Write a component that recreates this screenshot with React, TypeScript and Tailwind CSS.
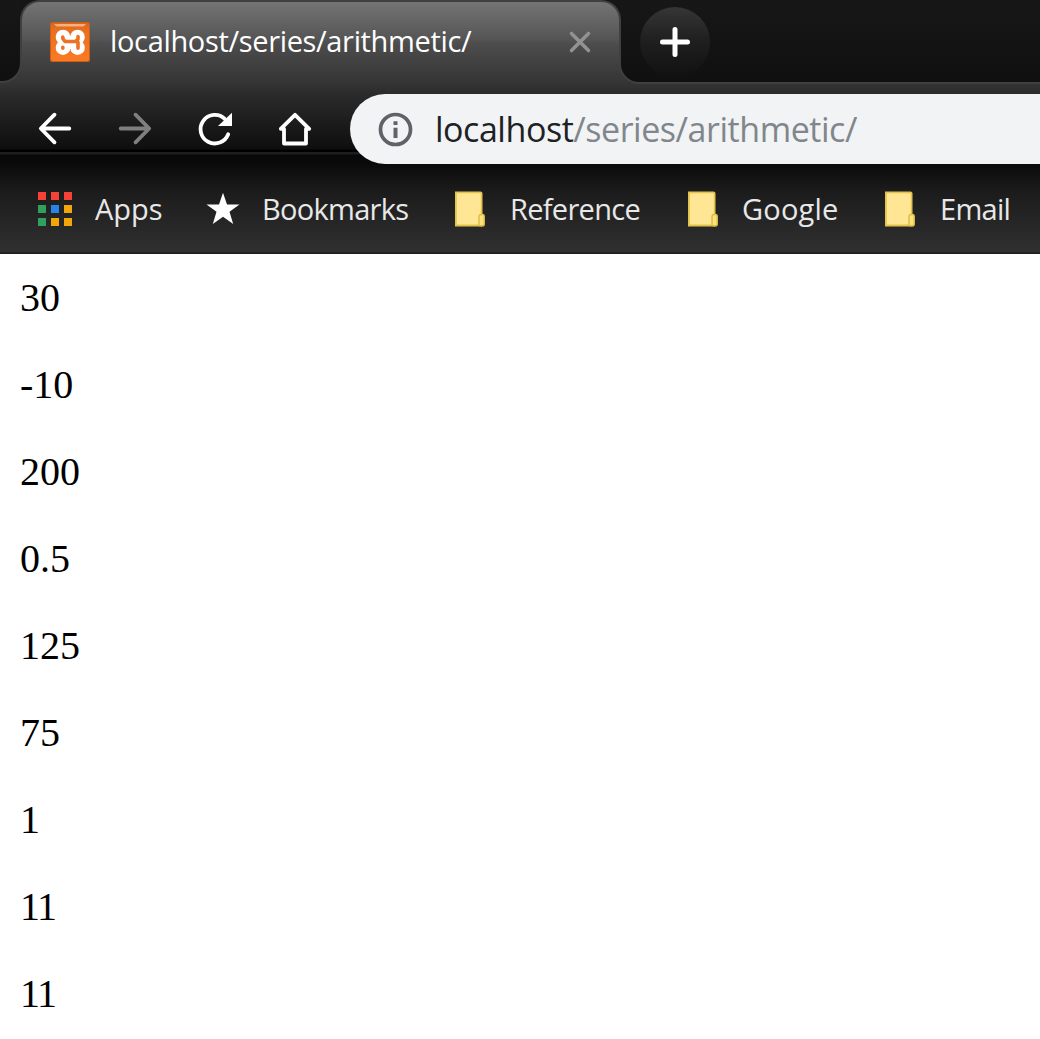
import React from "react";

const chromeGradient =
  "bg-[linear-gradient(to_bottom,#747474_0px,#545454_40px,#4d4d4d_43px,#343434_84px,#2b2b2b_94px,#0e0e0e_149px,#000_150px,#000_152px,#1e1e1e_152px,#1e1e1e_154px,#080808_155px,#0a0a0a_164px,#1b1b1b_190px,#303030_252px,#1c1c1c_253px)]";

const tabGradient =
  "bg-[linear-gradient(to_bottom,#747474_0px,#545454_38px,#4d4d4d_41px,#343434_82px)] bg-no-repeat bg-[length:100%_82px]";

function XamppIcon() {
  return (
    <svg width="40" height="40" viewBox="0 0 40 40" className="shrink-0">
      <defs>
        <linearGradient id="tile" x1="0" y1="0" x2="0" y2="1">
          <stop offset="0" stopColor="#d9661c" />
          <stop offset="0.2" stopColor="#e9701f" />
          <stop offset="1" stopColor="#fb7a24" />
        </linearGradient>
      </defs>
      <rect width="40" height="40" rx="2.5" fill="#c95f1c" />
      <rect x="1" y="1" width="38" height="38" rx="2" fill="url(#tile)" />
      <path d="M4 2H36L33.5 4.5H6.5Z" fill="#f5b080" />
      <g fill="#fff">
        <circle cx="13" cy="15" r="7.3" />
        <circle cx="27.5" cy="15" r="7.3" />
        <circle cx="13" cy="25.7" r="7.3" />
        <circle cx="27.5" cy="25.7" r="7.3" />
        <rect x="8" y="14" width="24.5" height="13" />
      </g>
      <g fill="none" stroke="#ec7224" strokeLinecap="round" strokeLinejoin="round">
        <path d="M12.8 15V16.5L15 19.5H25.5L28 17V14.5M28 20V26.2M12.8 25.2V26.2" strokeWidth="3.6" />
      </g>
    </svg>
  );
}

function Arrow({ className }: { className: string }) {
  return (
    <svg width="34" height="34" viewBox="0 0 34 34" fill="none" stroke="currentColor" strokeWidth="3.8" strokeLinecap="round" strokeLinejoin="round" className={className}>
      <path d="M31.3 16.5H3.5M16.5 2.7L2.8 16.5L16.5 30.3" />
    </svg>
  );
}

function ReloadIcon() {
  return (
    <svg width="36" height="36" viewBox="0 0 36 36" fill="none" className="text-white">
      <path d="M31.2 23.3A14.3 14.3 0 1 1 27.7 7.8" stroke="currentColor" strokeWidth="3.8" strokeLinecap="round" />
      <path d="M35 1.7V15H21Z" fill="currentColor" />
    </svg>
  );
}

function HomeIcon() {
  return (
    <svg width="36" height="36" viewBox="0 0 36 36" fill="none" stroke="#fff" strokeWidth="3.8" strokeLinecap="round" strokeLinejoin="round">
      <path d="M3.8 17.8L18 3.8L32.2 17.8H29V32.5H7V17.8Z" />
    </svg>
  );
}

function InfoIcon() {
  return (
    <svg width="34" height="34" viewBox="0 0 34 34" className="shrink-0 overflow-visible">
      <circle cx="17.5" cy="17.5" r="15" fill="none" stroke="#5f6368" strokeWidth="3.7" />
      <path d="M15.5 9.2H19.5V13H15.5ZM15.5 15.8H19.5V26H15.5Z" fill="#5f6368" />
    </svg>
  );
}

function FolderIcon() {
  return (
    <svg width="30" height="36" viewBox="0 0 30 36" className="shrink-0">
      <path d="M0 .5H25.5Q27.5 .5 27.5 2.5V35.5H0Z" fill="#e3c34b" />
      <path d="M1.8 2.2H24.8Q25.8 2.2 25.8 3.2V33.5H1.8Z" fill="#ffe694" />
      <path d="M24 26V33.2Q24 34.8 25.5 34.8H27.5Q29.2 34.8 29.2 33V25.5Q29.2 23.6 27.5 23.6H26.2Q24 23.6 24 26Z" fill="#fbe27d" stroke="#dfbf45" strokeWidth="1.5" />
    </svg>
  );
}

function AppsIcon() {
  return (
    <div className="grid h-[34px] w-[34px] grid-cols-3 content-between justify-between">
      <i className="size-2 bg-[#f44336]" />
      <i className="size-2 justify-self-center bg-[#f44336]" />
      <i className="size-2 justify-self-end bg-[#f44336]" />
      <i className="size-2 bg-[#2fa15c]" />
      <i className="size-2 justify-self-center bg-[#2585ea]" />
      <i className="size-2 justify-self-end bg-[#f2a60c]" />
      <i className="size-2 bg-[#2fa15c]" />
      <i className="size-2 justify-self-center bg-[#f2a60c]" />
      <i className="size-2 justify-self-end bg-[#f2a60c]" />
    </div>
  );
}

function StarIcon() {
  return (
    <svg width="34" height="34" viewBox="0 0 34 34" fill="#fff">
      <path d="M17 .8L21 12.5H33.5L23.5 19.8L27.2 32L17 24.8L6.8 32L10.5 19.8L.5 12.5H13Z" />
    </svg>
  );
}

const values = ["30", "-10", "200", "0.5", "125", "75", "1", "11", "11"];

export default function App() {
  return (
    <div className="h-[1039px] w-[1040px] overflow-hidden bg-white font-['Open_Sans',sans-serif]">
      <header className={`h-[254px] ${chromeGradient}`}>
        <div className="flex h-[84px]">
          <div className="h-[83px] w-[22px] rounded-br-[20px] border-r-2 border-b-2 border-[#404040] bg-[linear-gradient(#171717,#101010)]" />
          <div className="z-10 -mx-0.5 h-[62px] w-[601px] bg-[#161616]">
            <div className={`flex h-full items-end rounded-t-[20px] border-x-2 border-t-2 border-[#404040] pl-7 text-white ${tabGradient}`}>
              <XamppIcon />
              <span className="mb-px ml-5 w-[458px] text-[29px] leading-10 tracking-[-0.34px] whitespace-nowrap">localhost/series/arithmetic/</span>
              <svg width="24" height="24" viewBox="0 0 24 24" className="mb-2 shrink-0 text-[#929292]" stroke="currentColor" strokeWidth="3.6" strokeLinecap="round">
                <path d="M3.5 3.5L20.5 20.5M20.5 3.5L3.5 20.5" />
              </svg>
            </div>
          </div>
          <div className="h-[84px] flex-1 rounded-bl-[20px] border-b-2 border-l-2 border-[#404040] bg-[linear-gradient(#171717,#101010)] pt-[6.5px] pl-[19px]">
            <div className="flex size-[70px] items-center justify-center rounded-full bg-[linear-gradient(#363636,#1f1f1f_48%,#111)]">
              <svg width="32" height="32" viewBox="0 0 32 32" stroke="#fff" strokeWidth="5" strokeLinecap="round">
                <path d="M16 3.5V28.5M3.5 16H28.5" />
              </svg>
            </div>
          </div>
        </div>

        <div className="flex h-20 pt-[10px]">
          <nav className="flex h-[70px] w-[350px] items-center">
            <Arrow className="ml-[38px] text-white" />
            <Arrow className="ml-[46px] -scale-x-100 text-[#7f7f7f]" />
            <span className="ml-[45px]"><ReloadIcon /></span>
            <span className="ml-11"><HomeIcon /></span>
          </nav>
          <div className="flex h-[70px] flex-1 items-center rounded-l-full bg-[#f1f3f4] pl-7">
            <InfoIcon />
            <span className="ml-[23px] text-[34px] leading-[46px] tracking-[-0.46px] whitespace-nowrap text-[#80868b]">
              <span className="text-[#202124]">localhost</span>/series/arithmetic/
            </span>
          </div>
        </div>

        <div className="flex h-[90px] items-center text-[29px] whitespace-nowrap text-[#e8e8e8]">
          <div className="ml-[38px] flex w-[168px] items-center gap-[23px]"><AppsIcon />Apps</div>
          <div className="flex w-[249px] items-center gap-[22px] tracking-[-0.7px]"><StarIcon />Bookmarks</div>
          <div className="flex w-[233px] items-center gap-[25px] tracking-[-0.7px]"><FolderIcon />Reference</div>
          <div className="flex w-[197px] items-center gap-[24px] tracking-[0.2px]"><FolderIcon />Google</div>
          <div className="flex items-center gap-[25px] tracking-[-0.7px]"><FolderIcon />Email</div>
        </div>
      </header>

      <main className="flex flex-col gap-10 pt-5 pl-5 font-['Liberation_Serif',serif] text-[40px] leading-[47px] text-black">
        {values.map((value, i) => (
          <p key={i} className={value === "11" ? "tracking-[-1.5px]" : undefined}>{value}</p>
        ))}
      </main>
    </div>
  );
}
